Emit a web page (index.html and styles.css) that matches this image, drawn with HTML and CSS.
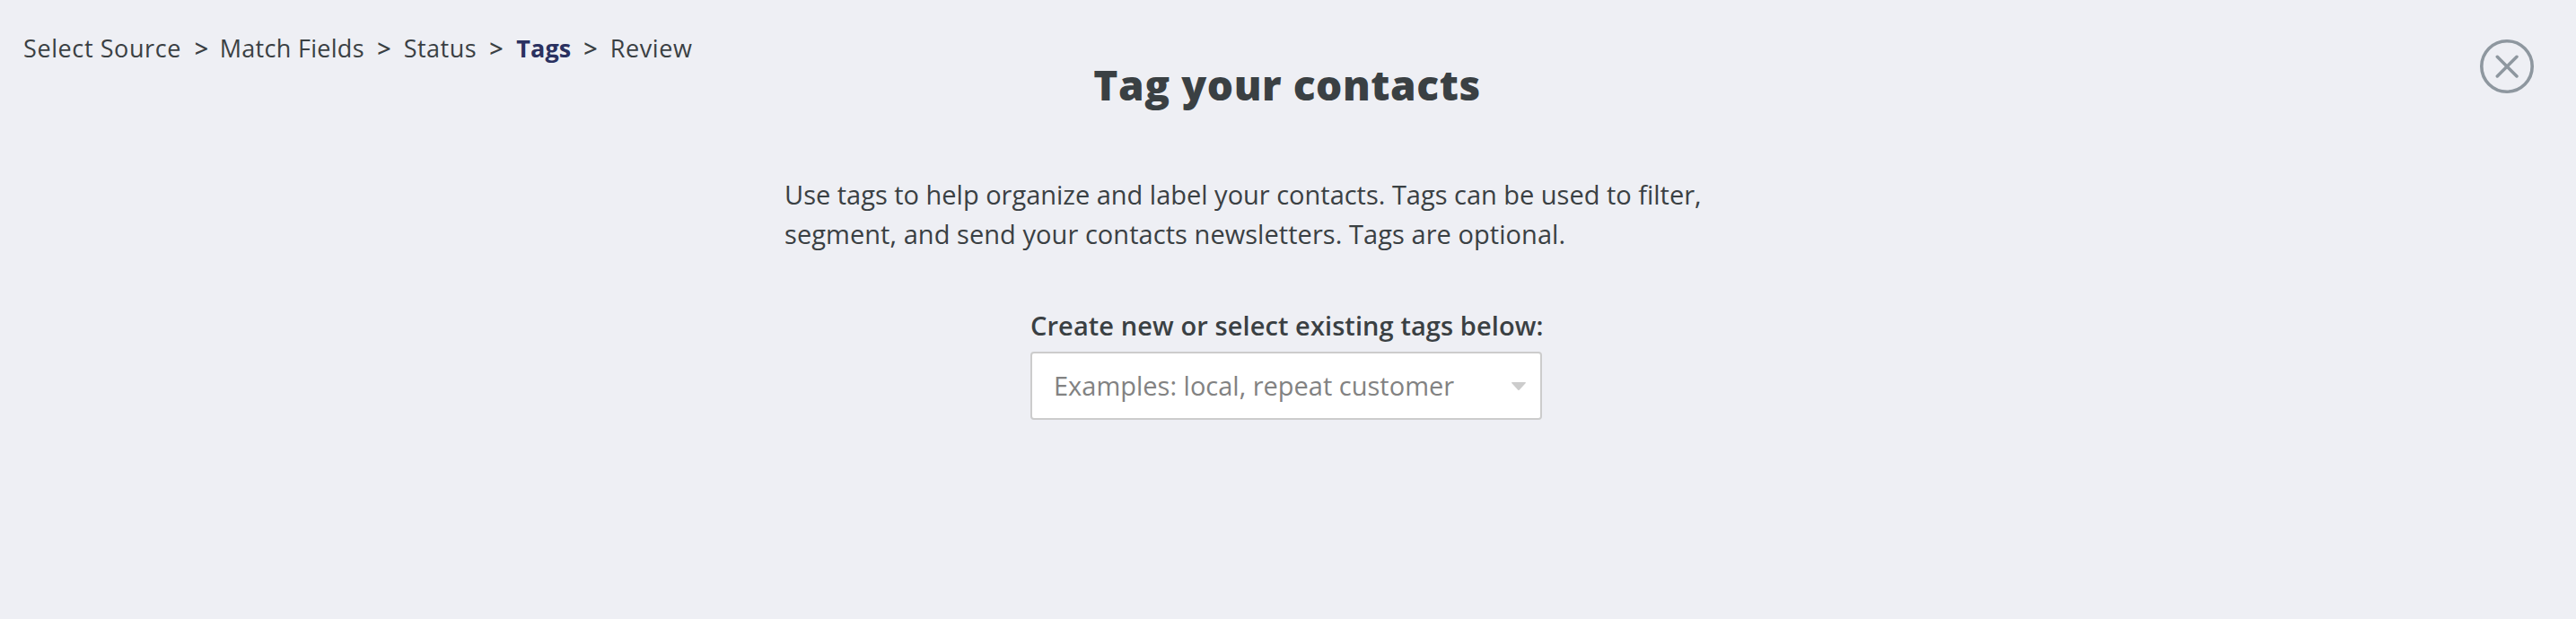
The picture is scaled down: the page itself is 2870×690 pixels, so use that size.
FILE: index.html
```html
<!DOCTYPE html>
<html lang="en">
<head>
<meta charset="utf-8">
<title>Tag your contacts</title>
<link rel="stylesheet" href="styles.css">
</head>
<body>
<header class="header">
  <nav class="crumbs">
    <span class="crumb source">Select Source</span><span class="sep">&gt;</span>
    <span class="crumb match">Match Fields</span><span class="sep">&gt;</span>
    <span class="crumb status">Status</span><span class="sep">&gt;</span>
    <span class="crumb current">Tags</span><span class="sep">&gt;</span>
    <span class="crumb review">Review</span>
  </nav>
  <h1 class="title">Tag your contacts</h1>
  <button class="close" aria-label="Close">
    <svg width="62" height="62" viewBox="0 0 62 62" fill="none" stroke="#8e979f">
      <circle cx="31" cy="31" r="28.2" stroke-width="3.6"/>
      <path d="M20.3 20.3L42 42M42 20.3L20.3 42" stroke-width="3.5" stroke-linecap="round"/>
    </svg>
  </button>
</header>
<main class="content">
  <p class="intro"><span class="line first">Use tags to help organize and label your contacts. Tags can be used to filter,</span>
  <span class="line second">segment, and send your contacts newsletters. Tags are optional.</span></p>
  <div class="field">
    <label class="label">Create new or select existing tags below:</label>
    <div class="select">
      <span class="placeholder">Examples: local, repeat customer</span>
      <svg class="arrow" width="16" height="10" viewBox="0 0 16 10"><path d="M.8 0H15.2Q16.4 .4 15.6 1.3L8.9 8.5Q8 9.5 7.1 8.5L.4 1.3Q-.4 .4 .8 0Z" fill="#cccccc"/></svg>
    </div>
  </div>
</main>
</body>
</html>
```
FILE: styles.css
```css
* { box-sizing: border-box; }
body {
  margin: 0;
  min-height: 690px;
  background: #eeeff4;
  color: #3a4043;
  font-family: "Open Sans", sans-serif;
}
.header {
  display: grid;
  grid-template-columns: 1fr auto 1fr;
  align-items: start;
  height: 195px;
  padding: 36px 46px 0 26px;
}
.crumbs {
  display: grid;
  grid-template-columns: 191.7px 27px 176.5px 28.5px 96.5px 29px 76px 28.5px 100px;
  font-size: 27px;
  line-height: 36px;
  white-space: nowrap;
}
.source { letter-spacing: 0.6px; }
.match { letter-spacing: 0.3px; }
.status { letter-spacing: 0.5px; }
.review { letter-spacing: 0.6px; }
.current {
  color: #2a3160;
  font-weight: 700;
  letter-spacing: 0.15px;
}
.sep { margin-left: -1px; font-weight: 600; }
.title {
  margin: 28px 0 0;
  transform: translateX(9px);
  font-size: 46px;
  font-weight: 800;
  line-height: 60px;
  letter-spacing: 0.57px;
  white-space: nowrap;
}
.close {
  justify-self: end;
  width: 62px;
  height: 62px;
  margin: 7px 0 0;
  padding: 0;
  border: 0;
  background: none;
}
.close svg { display: block; }
.content {
  width: 1124px;
  margin: 0 auto;
}
.intro {
  margin: 0 0 0 1px;
  font-size: 29px;
  line-height: 44px;
  white-space: nowrap;
}
.line { display: block; }
.first { letter-spacing: -0.01px; }
.second { letter-spacing: 0.055px; }
.field {
  width: 570px;
  margin: 58px 0 0 275px;
}
.label {
  display: block;
  font-size: 29px;
  font-weight: 600;
  line-height: 44px;
  letter-spacing: 0.09px;
  white-space: nowrap;
}
.select {
  display: flex;
  align-items: center;
  justify-content: space-between;
  height: 76px;
  margin-top: 7px;
  padding: 0 16px 2px 24px;
  border: 2px solid #cccccc;
  border-radius: 4px;
  background: #fff;
}
.placeholder {
  color: #828282;
  font-size: 29px;
  white-space: nowrap;
}
.arrow { margin-top: 4px; }
```
